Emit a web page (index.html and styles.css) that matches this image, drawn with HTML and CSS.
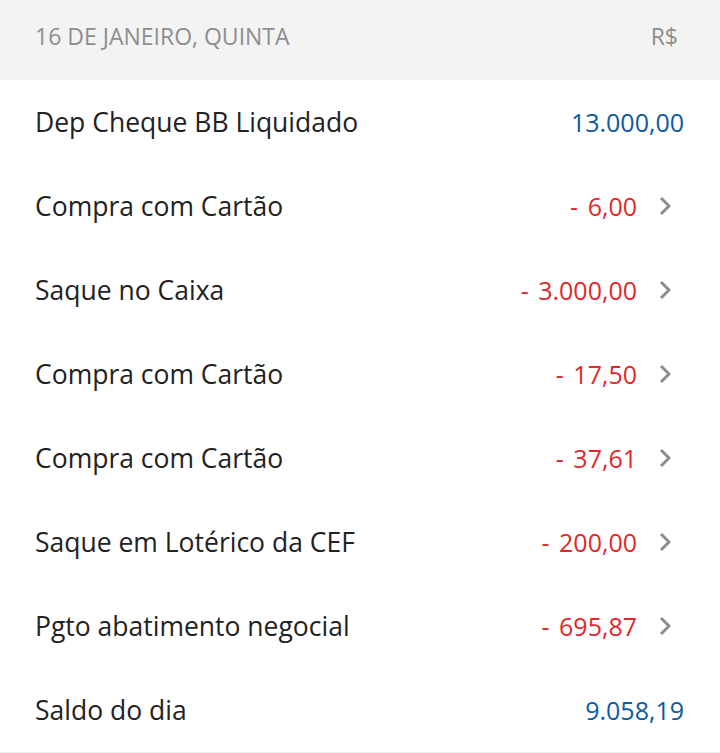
FILE: index.html
```html
<!DOCTYPE html>
<html lang="pt-BR">
<head>
<meta charset="utf-8">
<link rel="stylesheet" href="styles.css">
</head>
<body>
<div class="statement">
  <div class="day-header">
    <span class="day-label">16 DE JANEIRO, QUINTA</span>
    <span class="currency">R$</span>
  </div>
  <ul class="entries">
    <li class="entry">
      <span class="desc">Dep Cheque BB Liquidado</span>
      <span class="amount credit">13.000,00</span>
    </li>
    <li class="entry has-detail">
      <span class="desc">Compra com Cartão</span>
      <span class="amount debit">- 6,00</span>
      <svg class="chevron" viewBox="0 0 12 20"><path d="M2 2 L10 10 L2 18"/></svg>
    </li>
    <li class="entry has-detail">
      <span class="desc">Saque no Caixa</span>
      <span class="amount debit">- 3.000,00</span>
      <svg class="chevron" viewBox="0 0 12 20"><path d="M2 2 L10 10 L2 18"/></svg>
    </li>
    <li class="entry has-detail">
      <span class="desc">Compra com Cartão</span>
      <span class="amount debit">- 17,50</span>
      <svg class="chevron" viewBox="0 0 12 20"><path d="M2 2 L10 10 L2 18"/></svg>
    </li>
    <li class="entry has-detail">
      <span class="desc">Compra com Cartão</span>
      <span class="amount debit">- 37,61</span>
      <svg class="chevron" viewBox="0 0 12 20"><path d="M2 2 L10 10 L2 18"/></svg>
    </li>
    <li class="entry has-detail">
      <span class="desc">Saque em Lotérico da CEF</span>
      <span class="amount debit">- 200,00</span>
      <svg class="chevron" viewBox="0 0 12 20"><path d="M2 2 L10 10 L2 18"/></svg>
    </li>
    <li class="entry has-detail">
      <span class="desc">Pgto abatimento negocial</span>
      <span class="amount debit">- 695,87</span>
      <svg class="chevron" viewBox="0 0 12 20"><path d="M2 2 L10 10 L2 18"/></svg>
    </li>
    <li class="entry">
      <span class="desc">Saldo do dia</span>
      <span class="amount credit">9.058,19</span>
    </li>
  </ul>
</div>
</body>
</html>
```

FILE: styles.css
```css
html, body {
  margin: 0;
  padding: 0;
  background: #f1f1f1;
}
.statement {
  width: 720px;
  font-family: "Open Sans", "Lato", sans-serif;
  background: #ffffff;
  border-bottom: 1px solid #efefef;
}
.day-header {
  height: 80px;
  background: #f3f3f3;
  display: flex;
  align-items: center;
  justify-content: space-between;
  padding: 0 42px 8px 35px;
  box-sizing: border-box;
  color: #8e8e8e;
  font-size: 23px;
}
.entries {
  list-style: none;
  margin: 0;
  padding: 0;
}
.entry {
  height: 84px;
  display: flex;
  align-items: center;
  padding: 0 36px 0 35px;
  box-sizing: border-box;
}
.desc {
  flex: 1;
  color: #222222;
  font-size: 26.5px;
}
.amount {
  white-space: nowrap;
  font-size: 25px;
}
.credit {
  color: #0b5aa2;
}
.debit {
  color: #e0282a;
  word-spacing: 3px;
}
.chevron {
  width: 12px;
  height: 20px;
  margin-left: 22px;
  margin-right: 13px;
  fill: none;
  stroke: #8c8c8c;
  stroke-width: 3;
}
```
